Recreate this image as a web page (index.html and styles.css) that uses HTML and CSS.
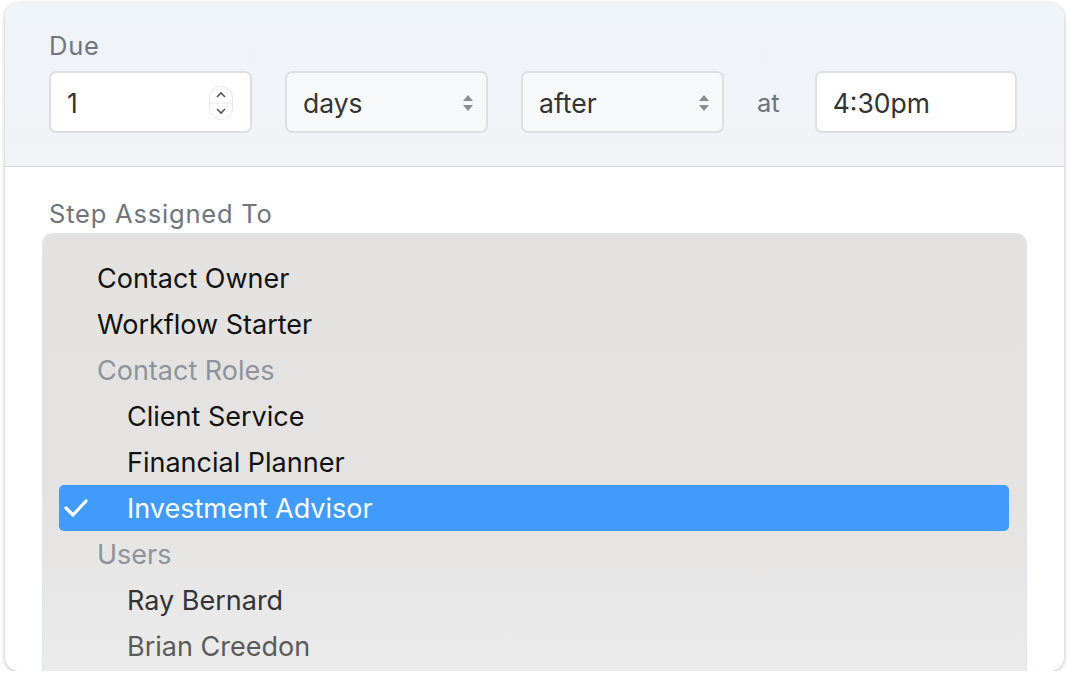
FILE: index.html
```html
<!DOCTYPE html>
<html lang="en">
<head>
    <meta charset="UTF-8">
    <title>Workflow Step</title>
    <link rel="stylesheet" href="styles.css">
</head>
<body>
    <div class="card">
        <div class="due-section">
            <div class="label">Due</div>
            <div class="due-row">
                <div class="field field-white">
                    <span>1</span>
                    <svg class="spinner" width="26" height="36" viewBox="0 0 26 36">
                        <rect x="1.5" y="1.5" width="23" height="33" rx="11" fill="#fff" stroke="#e4e6ea"/>
                        <line x1="2" y1="18" x2="24" y2="18" stroke="#e4e6ea"/>
                        <polyline points="9,12 13,8 17,12" fill="none" stroke="#555" stroke-width="1.6"/>
                        <polyline points="9,24 13,28 17,24" fill="none" stroke="#555" stroke-width="1.6"/>
                    </svg>
                </div>
                <div class="field">
                    <span>days</span>
                    <svg class="updown" width="12" height="20" viewBox="0 0 12 20">
                        <path d="M6 2 L11 8 H1 Z M6 18 L11 12 H1 Z" fill="#8a8d92"/>
                    </svg>
                </div>
                <div class="field">
                    <span>after</span>
                    <svg class="updown" width="12" height="20" viewBox="0 0 12 20">
                        <path d="M6 2 L11 8 H1 Z M6 18 L11 12 H1 Z" fill="#8a8d92"/>
                    </svg>
                </div>
                <div class="at">at</div>
                <div class="field field-white">
                    <span>4:30pm</span>
                </div>
            </div>
        </div>

        <div class="assign-section">
            <div class="label">Step Assigned To</div>
            <div class="dropdown">
                <div class="option">Contact Owner</div>
                <div class="option">Workflow Starter</div>
                <div class="option group">Contact Roles</div>
                <div class="option sub">Client Service</div>
                <div class="option sub">Financial Planner</div>
                <div class="option sub selected">
                    <svg class="check" width="26" height="20" viewBox="0 0 26 20">
                        <polyline points="3,10 10,17 23,3" fill="none" stroke="#fff" stroke-width="3.2" stroke-linecap="round" stroke-linejoin="round"/>
                    </svg>
                    Investment Advisor
                </div>
                <div class="option group">Users</div>
                <div class="option sub user">Ray Bernard</div>
                <div class="option sub user faded">Brian Creedon</div>
            </div>
        </div>
    </div>
</body>
</html>
```

FILE: styles.css
```css
body {
    margin: 0;
    background: #fff;
    font-family: Inter, 'Noto Sans', sans-serif;
}

.card {
    margin: 3px 6px 0 5px;
    height: 668px;
    border-radius: 14px;
    overflow: hidden;
    background: #fff;
    box-shadow: 0 1px 4px rgba(0, 0, 0, 0.28);
}

.due-section {
    background: linear-gradient(180deg, #eff4f9, #f1f3f6);
    border-bottom: 1px solid #d6dbe0;
    padding: 29px 44px 33px;
}

.label {
    font-size: 25.5px;
    line-height: 28px;
    color: #70757d;
    letter-spacing: 0.8px;
}

.due-row {
    display: flex;
    align-items: center;
    margin-top: 11px;
}

.field {
    box-sizing: border-box;
    width: 203px;
    height: 62px;
    margin-right: 33px;
    border: 2px solid #dcdfe3;
    border-radius: 7px;
    background: #f7f8fa;
    display: flex;
    align-items: center;
    justify-content: space-between;
    padding: 2px 12px 0 16px;
    font-size: 26.5px;
    color: #333;
}

.field-white {
    background: #fff;
}

.field:last-child {
    margin-right: 0;
    width: 202px;
}

.spinner {
    margin-right: 4px;
}

.at {
    font-size: 25.5px;
    color: #6e737a;
    margin-right: 35px;
}

.assign-section {
    padding: 33px 38px 0;
}

.assign-section .label {
    padding-left: 6px;
}

.dropdown {
    margin-top: 6px;
    height: 460px;
    border-radius: 9px;
    background: linear-gradient(180deg, #e3e2e1 0%, #e4e3e2 55%, #eeedee 100%);
    box-shadow: 0 0 0 1px rgba(170, 185, 205, 0.35);
    padding: 21px 17px 0 16px;
}

.option {
    height: 46px;
    display: flex;
    align-items: center;
    padding-left: 38px;
    font-size: 27px;
    color: #111;
    border-radius: 5px;
}

.option.group {
    color: #8e939a;
}

.option.sub {
    padding-left: 68px;
}

.option.user {
    color: #333;
}

.option.faded {
    color: #5a5a5a;
}

.option.selected {
    background: #419bfb;
    color: #fff;
    padding-left: 4px;
}

.check {
    margin-right: 38px;
}
```
